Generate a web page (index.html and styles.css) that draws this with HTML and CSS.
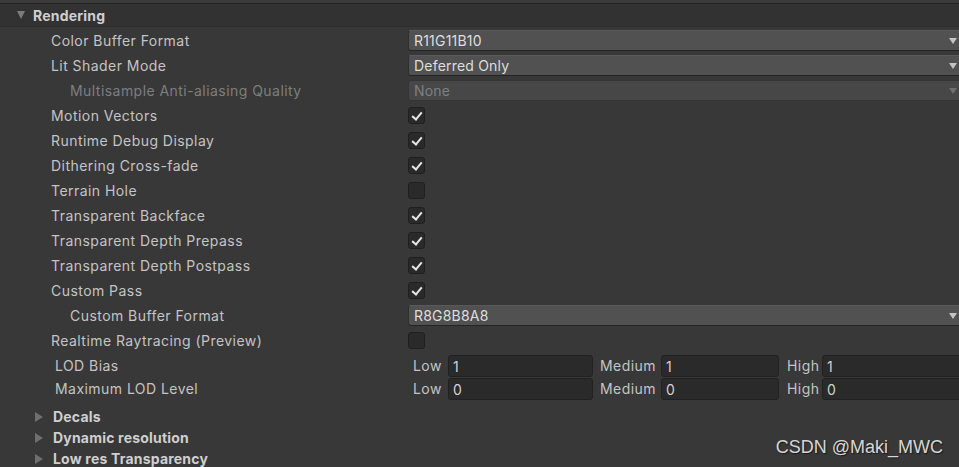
FILE: index.html
```html
<!DOCTYPE html>
<html>

<head>
    <title>HDRP Asset - Rendering</title>
    <link rel="stylesheet" href="styles.css">
</head>

<body>
    <div class="inspector">
        <div class="topline"></div>

        <div class="foldout-header">
            <span class="arrow open"></span>
            <span class="foldout-title">Rendering</span>
        </div>

        <div class="rows">
            <div class="row">
                <div class="label">Color Buffer Format</div>
                <div class="dropdown">R11G11B10<span class="dd-arrow"></span></div>
            </div>
            <div class="row">
                <div class="label">Lit Shader Mode</div>
                <div class="dropdown">Deferred Only<span class="dd-arrow"></span></div>
            </div>
            <div class="row disabled">
                <div class="label indent">Multisample Anti-aliasing Quality</div>
                <div class="dropdown">None<span class="dd-arrow"></span></div>
            </div>
            <div class="row">
                <div class="label">Motion Vectors</div>
                <div class="checkbox checked"></div>
            </div>
            <div class="row">
                <div class="label">Runtime Debug Display</div>
                <div class="checkbox checked"></div>
            </div>
            <div class="row">
                <div class="label">Dithering Cross-fade</div>
                <div class="checkbox checked"></div>
            </div>
            <div class="row">
                <div class="label">Terrain Hole</div>
                <div class="checkbox"></div>
            </div>
            <div class="row">
                <div class="label">Transparent Backface</div>
                <div class="checkbox checked"></div>
            </div>
            <div class="row">
                <div class="label">Transparent Depth Prepass</div>
                <div class="checkbox checked"></div>
            </div>
            <div class="row">
                <div class="label">Transparent Depth Postpass</div>
                <div class="checkbox checked"></div>
            </div>
            <div class="row">
                <div class="label">Custom Pass</div>
                <div class="checkbox checked"></div>
            </div>
            <div class="row">
                <div class="label indent">Custom Buffer Format</div>
                <div class="dropdown">R8G8B8A8<span class="dd-arrow"></span></div>
            </div>
            <div class="row">
                <div class="label">Realtime Raytracing (Preview)</div>
                <div class="checkbox"></div>
            </div>
            <div class="row lod">
                <div class="label lod-label">LOD Bias</div>
                <div class="triple">
                    <span class="sub-label low">Low</span><div class="field low">1</div>
                    <span class="sub-label medium">Medium</span><div class="field medium">1</div>
                    <span class="sub-label high">High</span><div class="field high">1</div>
                </div>
            </div>
            <div class="row lod">
                <div class="label lod-label">Maximum LOD Level</div>
                <div class="triple">
                    <span class="sub-label low">Low</span><div class="field low">0</div>
                    <span class="sub-label medium">Medium</span><div class="field medium">0</div>
                    <span class="sub-label high">High</span><div class="field high">0</div>
                </div>
            </div>
        </div>

        <div class="sections">
            <div class="section"><span class="arrow"></span><span class="section-title">Decals</span></div>
            <div class="section"><span class="arrow"></span><span class="section-title">Dynamic resolution</span></div>
            <div class="section"><span class="arrow"></span><span class="section-title">Low res Transparency</span></div>
        </div>
    </div>

    <div class="watermark">CSDN @Maki_MWC</div>
</body>

</html>
```

FILE: styles.css
```css
html,
body {
    margin: 0;
    padding: 0;
    width: 959px;
    height: 467px;
    overflow: hidden;
    background-color: #383838;
}

body {
    position: relative;
    font-family: Inter, "Noto Sans", sans-serif;
    font-size: 14px;
    letter-spacing: 0.45px;
    color: #c4c4c4;
}

.inspector {
    width: 975px;
}

.topline {
    height: 3px;
    border-bottom: 1px solid #232323;
    background-color: #3a3a3a;
}

.foldout-header {
    display: flex;
    align-items: center;
    height: 22px;
    padding-left: 17px;
    background-color: #323232;
    border-bottom: 1px solid #2e2e2e;
}

.foldout-title {
    margin-left: 8px;
    font-weight: bold;
    letter-spacing: 0.2px;
    color: #cfcfcf;
}

/* triangles for foldouts */
.arrow {
    display: inline-block;
    width: 0;
    height: 0;
    border-top: 5px solid transparent;
    border-bottom: 5px solid transparent;
    border-left: 8px solid #7c7c7c;
}

.arrow.open {
    border-left: 4.5px solid transparent;
    border-right: 4.5px solid transparent;
    border-top: 8px solid #7c7c7c;
    border-bottom: none;
}

.rows {
    padding-top: 1px;
}

.row {
    display: flex;
    align-items: center;
    height: 25px;
}

.row.lod {
    height: 23px;
}

.row.lod:nth-last-child(2) {
    margin-top: 1px;
}

.label {
    width: 357px;
    flex: none;
    padding-left: 51px;
    white-space: nowrap;
}

.label.indent {
    width: 338px;
    padding-left: 70px;
}

.label.lod-label {
    width: 353px;
    padding-left: 55px;
}

.row.disabled {
    color: #7e7e7e;
}

.dropdown {
    position: relative;
    flex: 1;
    height: 19px;
    line-height: 19px;
    padding-left: 5px;
    background-color: #515151;
    border: 1px solid #2f2f2f;
    border-top-color: #5a5a5a;
    border-bottom-color: #242424;
    border-radius: 3px;
    color: #dedede;
    letter-spacing: 0.2px;
}

.row.disabled .dropdown {
    background-color: #474747;
    border-color: #343434;
    color: #7f7f7f;
}

.dd-arrow {
    position: absolute;
    right: 17px;
    top: 7px;
    width: 0;
    height: 0;
    border-left: 4.5px solid transparent;
    border-right: 4.5px solid transparent;
    border-top: 6px solid #c4c4c4;
}

.row.disabled .dd-arrow {
    border-top-color: #6e6e6e;
}

.checkbox {
    position: relative;
    width: 15px;
    height: 15px;
    background-color: #2a2a2a;
    border: 1px solid #1f1f1f;
    border-radius: 3px;
}

.checkbox.checked::after {
    content: "";
    position: absolute;
    left: 4.5px;
    top: 1.5px;
    width: 4px;
    height: 8px;
    border-right: 2px solid #e6e6e6;
    border-bottom: 2px solid #e6e6e6;
    transform: rotate(40deg);
}

.triple {
    display: flex;
    align-items: center;
    flex: 1;
}

.sub-label {
    box-sizing: border-box;
    flex: none;
    color: #c4c4c4;
}

.sub-label.low {
    width: 40px;
    padding-left: 5px;
}

.sub-label.medium {
    width: 68px;
    padding-left: 7px;
}

.sub-label.high {
    width: 43px;
    padding-left: 8px;
}

.field {
    box-sizing: border-box;
    height: 22px;
    line-height: 21px;
    padding-left: 4px;
    background-color: #2a2a2a;
    border: 1px solid #212121;
    border-radius: 3px;
    color: #d2d2d2;
}

.field.low {
    width: 145px;
}

.field.medium {
    width: 118px;
}

.field.high {
    flex: 1;
}

.sections {
    padding-top: 6px;
}

.section {
    display: flex;
    align-items: center;
    height: 21px;
    padding-left: 35px;
}

.section-title {
    margin-left: 10px;
    font-weight: bold;
    letter-spacing: 0.2px;
    color: #cfcfcf;
}

.section .arrow {
    border-left-color: #6f6f6f;
}

.watermark {
    position: absolute;
    right: 16px;
    bottom: 9px;
    font-family: "Liberation Sans", Arial, sans-serif;
    font-size: 18px;
    letter-spacing: 0;
    color: #d6d6d6;
    text-shadow: 1px 1px 1px #1a1a1a;
}
```
